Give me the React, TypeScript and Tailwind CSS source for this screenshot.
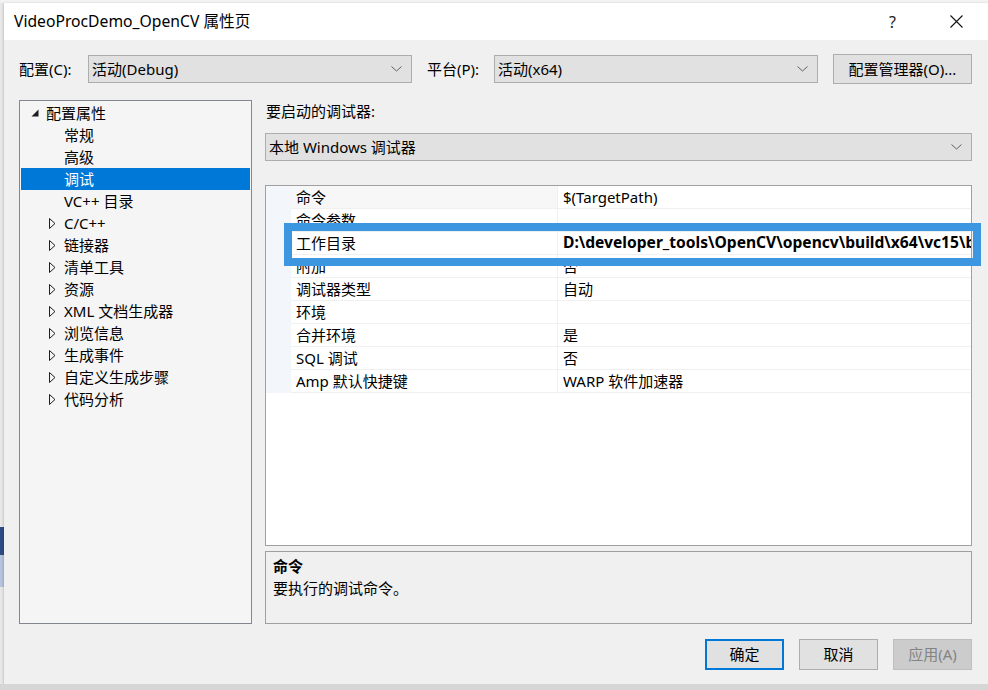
import React from "react";

const FONT = '"Noto Sans", "Noto Sans CJK SC", sans-serif';

function Chevron() {
  return (
    <svg width="11" height="6" viewBox="0 0 11 6" className="shrink-0">
      <path d="M0.5 0.5 L5.5 5 L10.5 0.5" fill="none" stroke="#606060" strokeWidth="1" />
    </svg>
  );
}

function Combo({ text, className }: { text: string; className: string }) {
  return (
    <div className={`flex items-center justify-between border border-[#adadad] bg-[#e1e1e1] pl-[3px] pr-[9px] ${className}`}>
      <span className="text-[15px] leading-none text-black whitespace-nowrap">{text}</span>
      <Chevron />
    </div>
  );
}

function Expanded() {
  return (
    <svg width="8" height="8" viewBox="0 0 8 8" className="shrink-0">
      <path d="M7.5 0.5 L7.5 7.5 L0.5 7.5 Z" fill="#1e1e1e" />
    </svg>
  );
}

function Collapsed() {
  return (
    <svg width="7" height="11" viewBox="0 0 7 11" className="shrink-0">
      <path d="M0.5 0.5 L6 5.5 L0.5 10.5 Z" fill="none" stroke="#1e1e1e" strokeWidth="1" />
    </svg>
  );
}

const treeChildren = ["常规", "高级", "调试", "VC++ 目录"];
const treeCollapsed = ["C/C++", "链接器", "清单工具", "资源", "XML 文档生成器", "浏览信息", "生成事件", "自定义生成步骤", "代码分析"];

const rows: { name: string; value: string; bold?: boolean }[] = [
  { name: "命令", value: "$(TargetPath)" },
  { name: "命令参数", value: "" },
  { name: "工作目录", value: "D:\\developer_tools\\OpenCV\\opencv\\build\\x64\\vc15\\bin", bold: true },
  { name: "附加", value: "否" },
  { name: "调试器类型", value: "自动" },
  { name: "环境", value: "" },
  { name: "合并环境", value: "是" },
  { name: "SQL 调试", value: "否" },
  { name: "Amp 默认快捷键", value: "WARP 软件加速器" },
];

export default function App() {
  return (
    <div className="w-[988px] h-[690px] overflow-hidden bg-[#d9d9d9] flex flex-col text-black" style={{ fontFamily: FONT }}>
      {/* editor strip behind */}
      <div className="h-[3px] bg-[#f3f3f3] shrink-0" />
      <div className="flex flex-1 min-h-0">
        {/* left strip behind */}
        <div className="w-[4px] shrink-0 flex flex-col bg-[#e8e8e8]">
          <div className="h-[524px]" />
          <div className="h-[28px] bg-[#2f4b82]" />
          <div className="h-[32px] bg-[#b7c4de]" />
        </div>
        {/* dialog */}
        <div className="w-[984px] min-w-0 shrink-0 flex flex-col bg-[#f0f0f0] shadow-[-1px_0_2px_rgba(0,0,0,0.15)]">
          {/* title bar */}
          <div className="h-[37px] shrink-0 bg-white flex items-center pl-[10px]">
            <span className="text-[15.7px] leading-none flex-1">VideoProcDemo_OpenCV 属性页</span>
            <span className="text-[16px] leading-none text-[#222] w-[12px] mr-[49px]">?</span>
            <svg width="13" height="13" viewBox="0 0 13 13" className="mr-[25px]">
              <path d="M0.5 0.5 L12.5 12.5 M12.5 0.5 L0.5 12.5" stroke="#111" strokeWidth="1.1" />
            </svg>
          </div>
          {/* body */}
          <div className="flex-1 flex flex-col pl-[15px] w-[968px]">
            {/* config row */}
            <div className="flex items-center mt-[14px] h-[30px] w-[953px]">
              <span className="text-[15px] leading-none w-[69px] shrink-0">配置(C):</span>
              <Combo text="活动(Debug)" className="w-[324px] h-[28px] shrink-0" />
              <span className="text-[15px] leading-none ml-[15px] w-[67px] shrink-0">平台(P):</span>
              <Combo text="活动(x64)" className="w-[324px] h-[28px] shrink-0" />
              <div className="ml-[15px] w-[139px] shrink-0 h-[30px] border border-[#adadad] bg-[#e1e1e1] flex items-center justify-center text-[15px] leading-none">
                配置管理器(O)...
              </div>
            </div>
            {/* main */}
            <div className="flex mt-[16px] h-[524px] w-[953px]">
              {/* tree */}
              <div className="w-[233px] shrink-0 h-full border border-[#828790] bg-[#f5f5f5] pt-[1px] px-[1px] text-[15px] leading-none">
                <div className="h-[22px] flex items-center pl-[10px]">
                  <Expanded />
                  <span className="ml-[7px]">配置属性</span>
                </div>
                {treeChildren.map((t) => (
                  <div
                    key={t}
                    className={`h-[22px] flex items-center pl-[43px] ${t === "调试" ? "bg-[#0078d7] text-white" : ""}`}
                  >
                    {t}
                  </div>
                ))}
                {treeCollapsed.map((t) => (
                  <div key={t} className="h-[22px] flex items-center pl-[28px]">
                    <Collapsed />
                    <span className="ml-[8px]">{t}</span>
                  </div>
                ))}
              </div>
              {/* right */}
              <div className="ml-[13px] w-[707px] shrink-0 min-w-0 flex flex-col">
                <div className="h-[22px] flex items-center pl-[1px] text-[15px] leading-none">要启动的调试器:</div>
                <Combo text="本地 Windows 调试器" className="mt-[11px] h-[28px]" />
                {/* grid */}
                <div className="relative mt-[24px] h-[361px] border border-[#a0a0a0] bg-white">
                  <div className="overflow-hidden h-full">
                    {rows.map((r, i) => (
                      <div key={r.name} className="flex h-[23px] text-[15px] leading-none">
                        <div className="w-[25px] shrink-0 bg-[#f3f6fa]" />
                        <div className={`w-[267px] shrink-0 flex items-center pl-[5px] border-b border-r border-[#f0f0f0] ${i === 0 ? "bg-[#f7f7f7]" : ""}`}>
                          {r.name}
                        </div>
                        <div className={`w-[413px] shrink-0 flex items-center pl-[5px] border-b border-[#f0f0f0] overflow-hidden whitespace-nowrap ${r.bold ? "font-bold text-[15.6px]" : ""}`}>
                          {r.value}
                        </div>
                      </div>
                    ))}
                  </div>
                  {/* annotation box */}
                  <div className="absolute left-[18px] top-[37px] w-[697px] h-[43px] border-[8px] border-[#3c96e0]" />
                </div>
                {/* description */}
                <div className="mt-[5px] h-[73px] border border-[#a0a0a0] bg-[#f0f0f0] pl-[7px] pt-[6px] text-[15px] leading-none">
                  <div className="font-bold h-[17px] flex items-center">命令</div>
                  <div className="mt-[5px] h-[17px] flex items-center">要执行的调试命令。</div>
                </div>
              </div>
            </div>
            {/* buttons */}
            <div className="flex justify-end gap-[15px] mt-[15px] w-[953px]">
              <div className="w-[79px] h-[31px] border-2 border-[#0078d7] bg-[#e1e1e1] flex items-center justify-center text-[15px] leading-none">确定</div>
              <div className="w-[79px] h-[31px] border border-[#adadad] bg-[#e1e1e1] flex items-center justify-center text-[15px] leading-none">取消</div>
              <div className="w-[79px] h-[31px] border border-[#bfbfbf] bg-[#cccccc] text-[#838383] flex items-center justify-center text-[15px] leading-none">应用(A)</div>
            </div>
          </div>
        </div>
      </div>
      <div className="h-[6px] shrink-0 bg-[#d6d6d6]" />
    </div>
  );
}
